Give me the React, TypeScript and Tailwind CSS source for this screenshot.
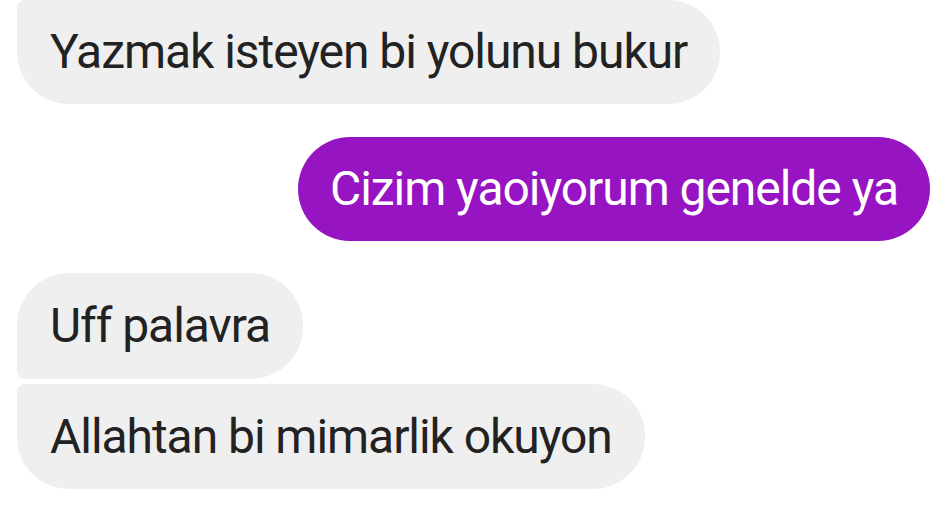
export default function App() {
  return (
    <div
      className="w-[950px] h-[519px] overflow-hidden bg-white flex flex-col pl-[17px] pr-[20px] tracking-[-1.05px]"
      style={{ fontFamily: "Roboto, 'Liberation Sans', sans-serif" }}
    >
      {/* received */}
      <div className="self-start h-[104px] flex items-center pl-[33px] pr-[33px] bg-[#efefef] rounded-tl-[8px] rounded-tr-[52px] rounded-br-[52px] rounded-bl-[52px] text-[48px] text-[#222222] leading-none">
        Yazmak isteyen bi yolunu bukur
      </div>

      {/* sent */}
      <div className="self-end mt-[33px] h-[104px] flex items-center px-[32px] bg-[#9614c1] rounded-[52px] text-[48px] text-white leading-none">
        Cizim yaoiyorum genelde ya
      </div>

      {/* received group */}
      <div className="mt-[32px] flex flex-col items-start gap-[5px]">
        <div className="h-[106px] flex items-center px-[33px] bg-[#efefef] rounded-tl-[52px] rounded-tr-[52px] rounded-br-[52px] rounded-bl-[8px] text-[48px] text-[#222222] leading-none">
          Uff palavra
        </div>
        <div className="h-[105px] flex items-center px-[33px] bg-[#efefef] rounded-tl-[8px] rounded-tr-[52px] rounded-br-[52px] rounded-bl-[52px] text-[48px] text-[#222222] leading-none">
          Allahtan bi mimarlik okuyon
        </div>
      </div>
    </div>
  );
}
